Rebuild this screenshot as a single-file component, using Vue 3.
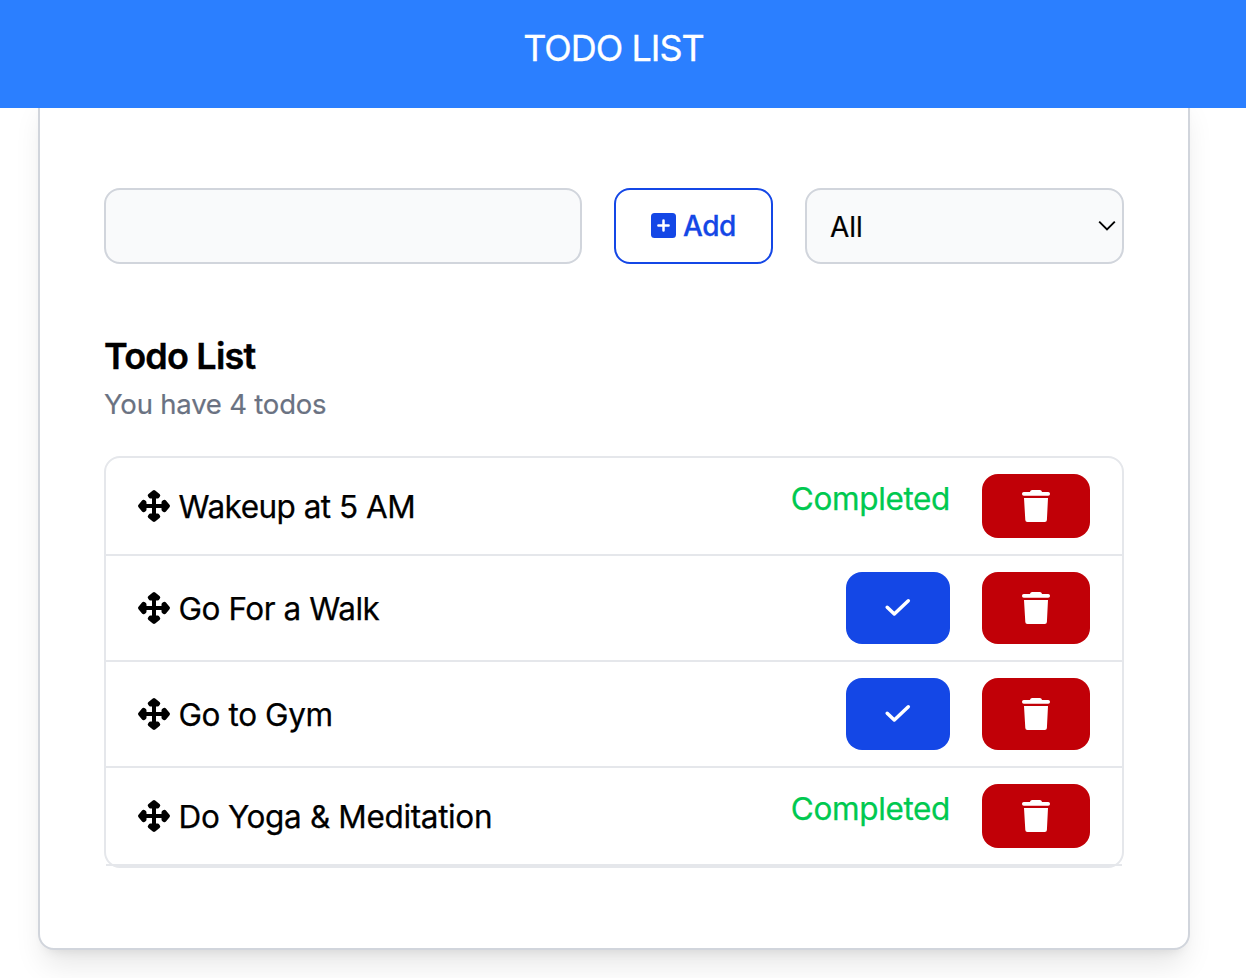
<script setup>
import { ref } from 'vue'

const text = ref('')
const filter = ref('All')
const todos = ref([
  { id: 1, title: 'Wakeup at 5 AM', done: true, cls: 't1' },
  { id: 2, title: 'Go For a Walk', done: false, cls: 't2' },
  { id: 3, title: 'Go to Gym', done: false, cls: 't3' },
  { id: 4, title: 'Do Yoga & Meditation', done: true, cls: 't4' },
])
</script>

<template>
  <div class="page">
    <header class="bar"><h1>TODO LIST</h1></header>
    <main class="card">
      <div class="form">
        <input v-model="text" class="field" type="text" aria-label="Todo" />
        <button class="add" type="button">
          <svg width="25" height="25" viewBox="0 0 25 25">
            <rect width="25" height="25" rx="3.5" fill="#1447e6" />
            <path d="M12.5 7.4v10.2M7.4 12.5h10.2" stroke="#fff" stroke-width="2.5" stroke-linecap="round" />
          </svg>
          <span>Add</span>
        </button>
        <div class="select">
          <select v-model="filter" aria-label="Filter">
            <option>All</option>
            <option>Completed</option>
          </select>
          <svg class="chev" width="18" height="12" viewBox="0 0 18 12" fill="none">
            <path d="M1.2 1.7L9 9.5l7.8-7.8" stroke="#000" stroke-width="1.9" />
          </svg>
        </div>
      </div>
      <h2>Todo List</h2>
      <p class="sub">You have {{ todos.length }} todos</p>
      <ul class="list">
        <li v-for="t in todos" :key="t.id">
          <svg class="move" width="32" height="32" viewBox="0 0 32 32">
            <path d="M16 6v20M6 16h20" stroke="#000" stroke-width="4" />
            <path
              d="M16 2L20.3 5.5L19.6 6.6H12.4L11.700 5.500zM16 30L11.700 26.500L12.400 25.400H19.600L20.300 26.500zM2 16L5.500 11.700L6.600 12.400V19.600L5.500 20.300zM30 16L26.500 20.300L25.400 19.600V12.400L26.500 11.700z"
              stroke="#000" stroke-width="3.800" stroke-linejoin="round"
            />
          </svg>
          <span class="title" :class="t.cls">{{ t.title }}</span>
          <span v-if="t.done" class="done">Completed</span>
          <button v-else class="check" type="button" aria-label="Complete">
            <svg width="32" height="32" viewBox="0 0 32 32" fill="none">
              <path d="M5.2 15.3l7.1 6.7 14-13.200" stroke="#fff" stroke-width="3.500" stroke-linecap="round" stroke-linejoin="round" />
            </svg>
          </button>
          <button class="del" type="button" aria-label="Delete">
            <svg width="32" height="32" viewBox="0 0 32 32" fill="#fff">
              <path d="M10 2c.3-1.300 1-2 2.200-2h7.600c1.200 0 1.900.7 2.200 2h6.200A1.800 1.800 0 0 1 30 3.800v.2A1.800 1.800 0 0 1 28.200 5.800H3.800A1.800 1.800 0 0 1 2 4v-.2A1.800 1.800 0 0 1 3.800 2z" />
              <path d="M4 8h24l-1.100 22a2.100 2.100 0 0 1-2.100 2H7.400a2.100 2.100 0 0 1-2.100-2z" />
            </svg>
          </button>
        </li>
      </ul>
    </main>
  </div>
</template>

<style>
html, body { margin: 0; background: #fff; overflow: hidden; }
</style>

<style scoped>
.page {
  width: 1246px;
  height: 978px;
  overflow: hidden;
  background: #fff;
  color: #000;
  font-family: Inter, "Liberation Sans", sans-serif;
}
.page * { box-sizing: border-box; }
.bar {
  position: relative;
  z-index: 1;
  height: 108px;
  padding: 28px 19px 0 0;
  background: #2b7fff;
  color: #fff;
  text-align: center;
}
h1 { margin: 0; font-size: 36px; line-height: 40px; font-weight: 400; letter-spacing: -1px; -webkit-text-stroke: .3px; }
.card {
  width: 1152px;
  height: 862px;
  margin: -20px 0 0 38px;
  padding: 98px 64px 0;
  border: 2px solid #d1d5dc;
  border-radius: 16px;
  background: #fff;
  box-shadow: 0 20px 30px -6px rgba(0, 0, 0, .1), 0 8px 12px -8px rgba(0, 0, 0, .1);
}
.form { display: flex; gap: 32px; height: 76px; }
.field, select {
  border: 2px solid #d1d5dc;
  border-radius: 16px;
  background: #f9fafb;
  font: inherit;
  font-size: 28px;
  color: #000;
  outline: 0;
}
.field { width: 478px; padding: 0 24px; }
.add {
  display: flex;
  align-items: center;
  justify-content: center;
  gap: 7px;
  width: 159px;
  padding: 0 0 2px;
  border: 2px solid #1447e6;
  border-radius: 16px;
  background: #fff;
  color: #1447e6;
  font: inherit;
  font-size: 28px;
  font-weight: 500;
  letter-spacing: -0.4px;
  -webkit-text-stroke: .3px;
}
.add span { padding-top: 2px; }
.select { position: relative; width: 319px; }
select { width: 100%; height: 76px; padding: 2px 23px 0; appearance: none; -webkit-text-stroke: .2px; }
.chev { position: absolute; right: 8px; top: 32px; }
h2 { margin: 70px 0 0; font-size: 36px; line-height: 44px; font-weight: 600; letter-spacing: -0.8px; -webkit-text-stroke: .4px; }
.sub { margin: 6px 0 0; font-size: 27.5px; line-height: 40px; letter-spacing: -0.2px; color: #6a7282; -webkit-text-stroke: .2px; }
.list {
  margin: 32px 0 0;
  padding: 0;
  list-style: none;
  border: 2px solid #e5e7eb;
  border-radius: 16px;
  font-size: 31.5px;
  -webkit-text-stroke: .25px;
}
li { display: flex; padding: 16px 32px; border-bottom: 2px solid #e5e7eb; line-height: 50px; }
.move { align-self: center; margin-right: 8.5px; }
.title { align-self: center; flex: 1; white-space: nowrap; padding-top: 1px; }
.t1 { letter-spacing: -0.52px; }
.t2 { letter-spacing: -0.45px; }
.t3 { letter-spacing: -0.4px; }
.t4 { letter-spacing: -0.35px; }
.done { color: #00c950; margin-right: 32px; letter-spacing: -0.36px; }
.check, .del {
  display: flex;
  align-items: center;
  justify-content: center;
  border: 0;
  padding: 0;
  border-radius: 16px;
}
.check { width: 104px; height: 72px; margin-right: 32px; background: #1447e6; }
.del { width: 108px; min-height: 64px; background: #c10007; }
</style>
